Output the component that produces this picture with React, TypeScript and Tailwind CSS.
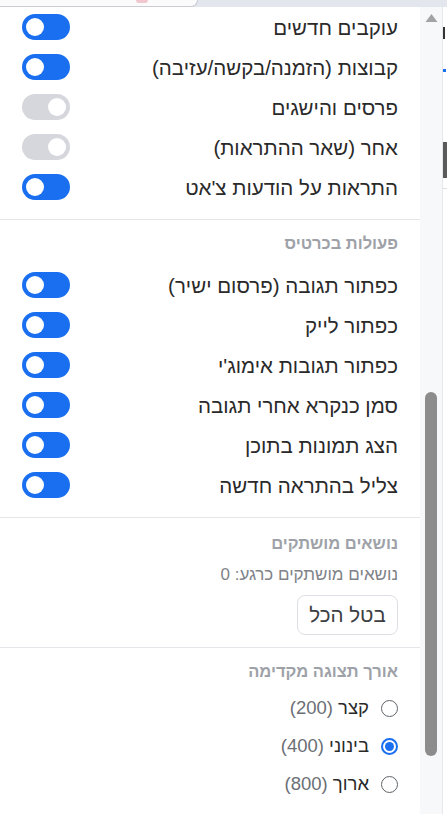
import React from "react";

type ToggleItem = { label: string; on: boolean };

const notifyItems: ToggleItem[] = [
  { label: "עוקבים חדשים", on: true },
  { label: "קבוצות (הזמנה/בקשה/עזיבה)", on: true },
  { label: "פרסים והישגים", on: false },
  { label: "אחר (שאר ההתראות)", on: false },
  { label: "התראות על הודעות צ'אט", on: true },
];

const cardItems: ToggleItem[] = [
  { label: "כפתור תגובה (פרסום ישיר)", on: true },
  { label: "כפתור לייק", on: true },
  { label: "כפתור תגובות אימוג'י", on: true },
  { label: "סמן כנקרא אחרי תגובה", on: true },
  { label: "הצג תמונות בתוכן", on: true },
  { label: "צליל בהתראה חדשה", on: true },
];

const lengths = [
  { name: "קצר", value: "(200)", checked: false },
  { name: "בינוני", value: "(400)", checked: true },
  { name: "ארוך", value: "(800)", checked: false },
];

function Toggle({ on }: { on: boolean }) {
  return (
    <div
      dir="ltr"
      className={
        on
          ? "w-12 h-[26px] rounded-full bg-[#1a6ff0] flex items-center justify-start px-[4px] shrink-0"
          : "w-12 h-[26px] rounded-full bg-[#d5d7dc] flex items-center justify-end px-[4px] shrink-0"
      }
    >
      <div className="w-[18px] h-[18px] rounded-full bg-white" />
    </div>
  );
}

function ToggleRow({ item }: { item: ToggleItem }) {
  return (
    <div className="h-10 flex items-center justify-between">
      <span className="pt-[3px] text-[20.5px] text-[#2a2a2a] leading-none">{item.label}</span>
      <Toggle on={item.on} />
    </div>
  );
}

function SectionTitle({ children }: { children: React.ReactNode }) {
  return <div className="text-[16.5px] font-bold text-[#9ea2a8] leading-[22px]">{children}</div>;
}

export default function App() {
  return (
    <div className="w-[447px] h-[814px] overflow-hidden bg-white flex flex-col font-['Liberation_Sans',Arial,sans-serif]">
      {/* browser tab strip */}
      <div className="h-[7px] flex shrink-0 bg-[#e4e6ee]">
        <div className="w-[198px] h-full bg-[#fbfbfc] border-b border-r border-[#c9ccd3] rounded-br-[10px] flex">
          <div className="ml-[136px] w-[12px] h-[3px] bg-[#f0c6cf] rounded-b" />
        </div>
        <div className="flex-1" />
      </div>

      <div className="flex flex-1 min-h-0">
        {/* popup content */}
        <div dir="rtl" className="w-[420px] shrink-0 flex flex-col">
          <section className="px-[22px] pb-3 border-b border-[#e4e6ea]">
            {notifyItems.map((it) => (
              <ToggleRow key={it.label} item={it} />
            ))}
          </section>

          <section className="px-[22px] pt-3 pb-3 border-b border-[#e4e6ea]">
            <SectionTitle>פעולות בכרטיס</SectionTitle>
            <div className="mt-[11px]">
              {cardItems.map((it) => (
                <ToggleRow key={it.label} item={it} />
              ))}
            </div>
          </section>

          <section className="px-[22px] pt-[14px] pb-3 border-b border-[#e4e6ea]">
            <SectionTitle>נושאים מושתקים</SectionTitle>
            <div className="mt-[10px] text-[17px] text-[#808389] leading-[22px]">נושאים מושתקים כרגע: 0</div>
            <div className="mt-[9px] flex">
              <button className="h-10 w-[101px] rounded-[8px] border border-[#dcdfe3] bg-white text-[20.5px] text-[#3c4043] leading-none">
                בטל הכל
              </button>
            </div>
          </section>

          <section className="px-[22px] pt-3">
            <SectionTitle>אורך תצוגה מקדימה</SectionTitle>
            <div className="mt-[7px] flex flex-col">
              {lengths.map((l) => (
                <div key={l.name} className="h-[38px] flex items-center gap-[12px]">
                  {l.checked ? (
                    <div className="w-[17px] h-[17px] rounded-full border-2 border-[#1a6ff0] flex items-center justify-center shrink-0">
                      <div className="w-[9px] h-[9px] rounded-full bg-[#1a6ff0]" />
                    </div>
                  ) : (
                    <div className="w-[17px] h-[17px] rounded-full border border-[#5f6368] shrink-0" />
                  )}
                  <span className="text-[18.5px] leading-none">
                    <span className="text-[#2a2a2a]">{l.name}</span>{" "}
                    <span className="text-[#6b6f75]">{l.value}</span>
                  </span>
                </div>
              ))}
            </div>
          </section>
        </div>

        {/* scrollbar */}
        <div className="w-[23px] shrink-0 bg-[#f7f8f9] border-r border-[#e6e7ea] flex flex-col items-start pl-[5px]">
          <svg className="mt-[6px]" width="13" height="10" viewBox="0 0 13 10">
            <path d="M6.5 1 L12.5 9 L0.5 9 Z" fill="#a3a3a3" />
          </svg>
          <div className="mt-[369px] w-[12px] h-[364px] rounded-full bg-[#8c8c8c]" />
        </div>

        {/* page behind the popup */}
        <div className="flex-1 bg-white flex flex-col">
          <div className="mt-[20px] w-[2px] h-[12px] bg-[#333]" />
          <div className="mt-[30px] w-[3px] h-[3px] bg-[#1a6ff0]" />
          <div className="mt-[70px] w-full h-[36px] bg-[#5a5a5a]" />
          <div className="mt-[10px] w-full h-[1px] bg-[#e0e0e0]" />
        </div>
      </div>
    </div>
  );
}
